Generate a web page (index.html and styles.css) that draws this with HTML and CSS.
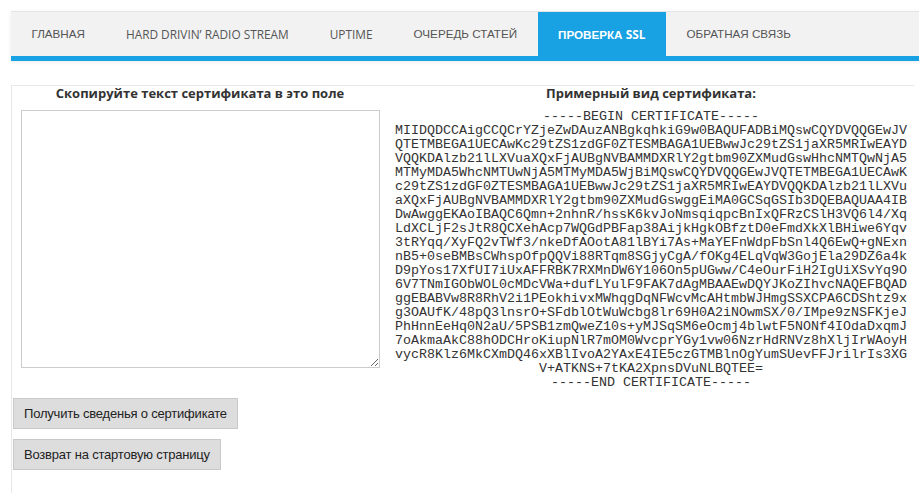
FILE: index.html
```html
<!DOCTYPE html>
<html lang="ru">
<head>
<meta charset="utf-8">
<title>Проверка SSL</title>
<link rel="stylesheet" href="styles.css">
</head>
<body>
<header class="nav-wrap">
  <nav class="nav">
    <a class="nav-item cyr" href="#">Главная</a>
    <a class="nav-item lat" href="#">Hard Drivin’ Radio Stream</a>
    <a class="nav-item lat" href="#">Uptime</a>
    <a class="nav-item cyr" href="#">Очередь статей</a>
    <a class="nav-item cyr active" href="#">Проверка <span class="lat">ssl</span></a>
    <a class="nav-item cyr" href="#">Обратная связь</a>
  </nav>
</header>
<main class="content">
  <div class="cols">
    <section class="col-left">
      <h2 class="heading">Скопируйте текст сертификата в это поле</h2>
      <textarea class="cert-input"></textarea>
    </section>
    <section class="col-right">
      <h2 class="heading">Примерный вид сертификата:</h2>
      <div class="cert-sample">-----BEGIN CERTIFICATE-----
MIIDQDCCAigCCQCrYZjeZwDAuzANBgkqhkiG9w0BAQUFADBiMQswCQYDVQQGEwJV
QTETMBEGA1UECAwKc29tZS1zdGF0ZTESMBAGA1UEBwwJc29tZS1jaXR5MRIwEAYD
VQQKDAlzb21lLXVuaXQxFjAUBgNVBAMMDXRlY2gtbm90ZXMudGswHhcNMTQwNjA5
MTMyMDA5WhcNMTUwNjA5MTMyMDA5WjBiMQswCQYDVQQGEwJVQTETMBEGA1UECAwK
c29tZS1zdGF0ZTESMBAGA1UEBwwJc29tZS1jaXR5MRIwEAYDVQQKDAlzb21lLXVu
aXQxFjAUBgNVBAMMDXRlY2gtbm90ZXMudGswggEiMA0GCSqGSIb3DQEBAQUAA4IB
DwAwggEKAoIBAQC6Qmn+2nhnR/hssK6kvJoNmsqiqpcBnIxQFRzCSlH3VQ6l4/Xq
LdXCLjF2sJtR8QCXehAcp7WQGdPBFap38AijkHgkOBfztD0eFmdXkXlBHiwe6Yqv
3tRYqq/XyFQ2vTWf3/nkeDfAOotA81lBYi7As+MaYEFnWdpFbSnl4Q6EwQ+gNExn
nB5+0seBMBsCWhspOfpQQVi88RTqm8SGjyCgA/fOKg4ELqVqW3GojEla29DZ6a4k
D9pYos17XfUI7iUxAFFRBK7RXMnDW6Y106On5pUGww/C4eOurFiH2IgUiXSvYq9O
6V7TNmIGObWOL0cMDcVWa+dufLYulF9FAK7dAgMBAAEwDQYJKoZIhvcNAQEFBQAD
ggEBABVw8R8RhV2i1PEokhivxMWhqgDqNFWcvMcAHtmbWJHmgSSXCPA6CDShtz9x
g3OAUfK/48pQ3lnsrO+SFdblOtWuWcbg8lr69H0A2iNOwmSX/0/IMpe9zNSFKjeJ
PhHnnEeHq0N2aU/5PSB1zmQweZ10s+yMJSqSM6eOcmj4blwtF5NONf4IOdaDxqmJ
7oAkmaAkC88hODCHroKiupNlR7mOM0WvcprYGy1vw06NzrHdRNVz8hXljIrWAoyH
vycR8Klz6MkCXmDQ46xXBlIvoA2YAxE4IE5czGTMBlnOgYumSUevFFJrilrIs3XG
V+ATKNS+7tKA2XpnsDVuNLBQTEE=
-----END CERTIFICATE-----</div>
    </section>
  </div>
  <div class="actions">
    <button class="btn" type="button">Получить сведенья о сертификате</button>
    <button class="btn" type="button">Возврат на стартовую страницу</button>
  </div>
</main>
</body>
</html>
```

FILE: styles.css
```css
html, body {
  margin: 0;
  padding: 0;
  background: #ffffff;
  overflow: hidden;
}

body {
  font-family: "Liberation Sans", Arial, sans-serif;
  color: #333333;
}

.nav-wrap {
  padding: 11px 0 0 11px;
}

.nav {
  display: flex;
  background: #f2f2f2;
  border-top: 1px solid #e4e4e4;
  border-bottom: 5px solid #18a1e3;
  height: 44px;
  box-shadow: 0 1px 4px rgba(0, 0, 0, 0.08);
}

.nav-item {
  display: block;
  padding: 0 20.5px;
  line-height: 44px;
  text-transform: uppercase;
  text-decoration: none;
  color: #555555;
  white-space: nowrap;
}

.nav-item.cyr {
  font-family: "Liberation Sans", Arial, sans-serif;
  font-size: 11.65px;
}

.nav-item.lat,
.nav-item .lat {
  font-family: "Open Sans", sans-serif;
  font-size: 11.85px;
}

.nav-item.active {
  background: #18a1e3;
  color: #ffffff;
  font-weight: bold;
}

.content {
  margin: 24px 5px 0 11px;
  border-top: 1px solid #e8e8e8;
  border-left: 1px solid #e8e8e8;
  min-height: 420px;
}

.cols {
  display: grid;
  grid-template-columns: 376px 1fr;
}

.heading {
  margin: 0;
  font-family: "Open Sans", sans-serif;
  font-weight: bold;
  font-size: 13px;
  line-height: 14px;
  text-align: center;
  color: #333333;
}

.col-left {
  display: flex;
  flex-direction: column;
  padding-left: 9px;
}

.col-left .heading {
  margin-left: -9px;
}

.cert-input {
  margin-top: 10px;
  width: 359px;
  height: 258px;
  box-sizing: border-box;
  border: 1px solid #cccccc;
  padding: 2px;
  font-family: "Liberation Mono", monospace;
  font-size: 13px;
}

.cert-sample {
  margin-top: 10px;
  font-family: "Courier New", "Nimbus Mono PS", "Nimbus Mono L", FreeMono, "Liberation Mono", monospace;
  font-size: 13.33px;
  line-height: 14px;
  white-space: pre;
  text-align: center;
  color: #333333;
}

.actions {
  display: flex;
  flex-direction: column;
  align-items: flex-start;
  gap: 10px;
  margin-top: 8px;
  padding-left: 1px;
}

.btn {
  font-family: "Liberation Sans", Arial, sans-serif;
  font-size: 13px;
  letter-spacing: -0.2px;
  color: #222222;
  background: #dddddd;
  border: 1px solid #c9c9c9;
  padding: 0 10px;
  height: 31px;
  border-radius: 0;
}
```
